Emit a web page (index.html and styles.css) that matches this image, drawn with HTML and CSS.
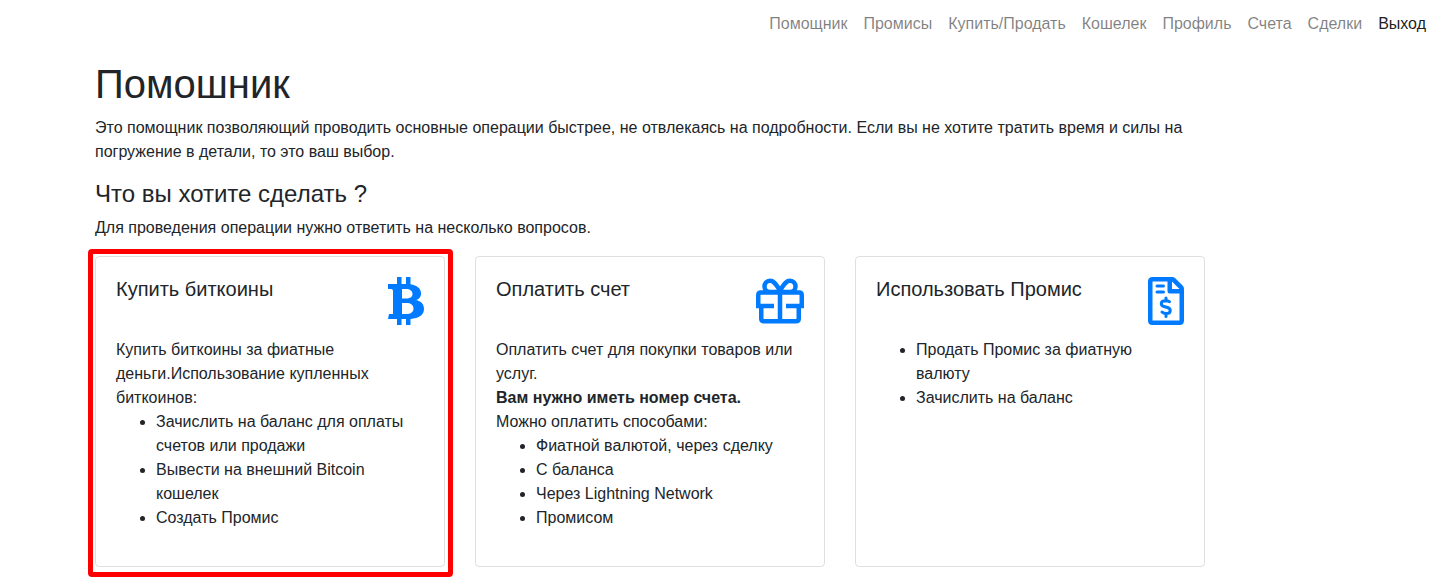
FILE: index.html
```
<!DOCTYPE html>
<html lang="ru">
<head>
<meta charset="utf-8">
<meta name="viewport" content="width=device-width, initial-scale=1">
<title>Помошник</title>
<link rel="stylesheet" href="styles.css">
</head>
<body>
<nav class="navbar">
  <a class="nav-link" href="#">Помощник</a>
  <a class="nav-link" href="#">Промисы</a>
  <a class="nav-link" href="#">Купить/Продать</a>
  <a class="nav-link" href="#">Кошелек</a>
  <a class="nav-link" href="#">Профиль</a>
  <a class="nav-link" href="#">Счета</a>
  <a class="nav-link" href="#">Сделки</a>
  <a class="nav-link nav-link-active" href="#">Выход</a>
</nav>
<main class="container">
  <h1 class="title">Помошник</h1>
  <p class="lead">Это помощник позволяющий проводить основные операции быстрее, не отвлекаясь на подробности. Если вы не хотите тратить время и силы на погружение в детали, то это ваш выбор.</p>
  <h2 class="subtitle">Что вы хотите сделать ?</h2>
  <p class="hint">Для проведения операции нужно ответить на несколько вопросов.</p>
  <div class="cards">
    <section class="card card-selected">
      <header class="card-head">
        <h3 class="card-title">Купить биткоины</h3>
        <svg class="icon" width="36" height="48" viewBox="0 0 36 48" aria-hidden="true">
          <path fill="currentColor" fill-rule="evenodd" d="M9 0h4.500v7H18V0h4.500v7.300C29 8.500 33 11.500 33 16.200c0 4-2 5.800-5 6.800 5 1 8 4 8 9 0 6-5 9.200-13.500 9.900V48H18v-6h-4.500v6H9v-6H0l1-5h3c1 0 1 0 1-1V14c0-1-.5-2-2-2H0V7h9zM14 12v9.500h4c4 0 6.500-1.500 6.500-4.500S22 12 18 12zM14 26v11h4c5 0 7.500-2 7.500-5.500S23 26 18 26z"/>
        </svg>
      </header>
      <p class="card-text">Купить биткоины за фиатные деньги.Использование купленных биткоинов:</p>
      <ul class="list">
        <li>Зачислить на баланс для оплаты счетов или продажи</li>
        <li>Вывести на внешний Bitcoin кошелек</li>
        <li>Создать Промис</li>
      </ul>
    </section>
    <section class="card">
      <header class="card-head">
        <h3 class="card-title">Оплатить счет</h3>
        <svg class="icon" width="48" height="48" viewBox="0 0 48 48" fill="none" stroke="currentColor" stroke-width="4.5" aria-hidden="true">
          <path d="M18 29H2.250V18q0-2.500 2.500-2.500h38.500q2.500 0 2.500 2.500v11H30M5.250 29v12.500q0 2.750 2.750 2.750h32q2.750 0 2.750-2.750V29M24 15v29M24 15H14c-3.500 0-5.500-2.500-5.500-5.500S10.500 3.750 14 3.750c4.500 0 6.500 5 10 9.500 3.500-4.500 5.500-9.500 10-9.500 3.500 0 5.500 2.750 5.500 5.750S37.500 15 34 15z"/>
        </svg>
      </header>
      <p class="card-text">Оплатить счет для покупки товаров или услуг.<br><strong>Вам нужно иметь номер счета.</strong><br>Можно оплатить способами:</p>
      <ul class="list">
        <li>Фиатной валютой, через сделку</li>
        <li>С баланса</li>
        <li>Через Lightning Network</li>
        <li>Промисом</li>
      </ul>
    </section>
    <section class="card">
      <header class="card-head">
        <h3 class="card-title">Использовать Промис</h3>
        <svg class="icon" width="36" height="48" viewBox="0 0 36 48" aria-hidden="true">
          <path fill="currentColor" fill-rule="evenodd" d="M4.500 0H24q2 0 3 1l8 8q1 1 1 3v31.500q0 4.500-4.500 4.500h-27Q0 48 0 43.500v-39Q0 0 4.500 0zM4.500 4.500v39h27V16.500H21.500q-2 0-2-2v-10zM24 4.500V12h7.500z"/>
          <path fill="none" stroke="currentColor" stroke-width="3" stroke-linecap="round" d="M9 9H15.500M9 15H15.500M18 21V24M18 36.500V39.500M21.500 24.700c-1-.6-2-.9-3-.9h-1.500c-4.500 0-5 4.500-1 5.700l3.500 1c4 1.200 3.500 6-1 6-2 0-3.500-.4-4.500-1.500"/>
        </svg>
      </header>
      <ul class="list">
        <li>Продать Промис за фиатную валюту</li>
        <li>Зачислить на баланс</li>
      </ul>
    </section>
  </div>
</main>
</body>
</html>
```
FILE: styles.css
```
*, *::before, *::after { box-sizing: border-box; }
body {
  margin: 0;
  background: #fff;
  color: #212529;
  font-family: "Liberation Sans", Arial, sans-serif;
  font-size: 16px;
  line-height: 24px;
}
h1, h2, h3, p, ul { margin: 0; font-weight: 400; }
.navbar {
  display: flex;
  flex-wrap: wrap;
  justify-content: flex-end;
  padding: 4px 6px;
}
.nav-link { padding: 8px; color: rgba(0, 0, 0, .5); text-decoration: none; }
.nav-link-active { color: rgba(0, 0, 0, .9); }
.container { max-width: 1220px; padding: 12px 15px 16px 95px; }
.title { margin-bottom: 8px; font-size: 40px; line-height: 48px; }
.lead { margin-bottom: 16px; }
.subtitle { margin-bottom: 8px; font-size: 24px; line-height: 28px; }
.hint { margin-bottom: 16px; }
.cards { display: grid; grid-template-columns: repeat(3, 1fr); gap: 30px; }
.card {
  position: relative;
  padding: 20px 20px 36px;
  border: 1px solid rgba(0, 0, 0, .125);
  border-radius: 4px;
}
.card-selected::after {
  content: "";
  position: absolute;
  inset: -8px -9px -11px -8px;
  border: 5px solid #f00;
  border-radius: 4px;
  pointer-events: none;
}
.card-head {
  display: flex;
  justify-content: space-between;
  align-items: flex-start;
  margin-bottom: 13px;
}
.card-title { font-size: 20px; line-height: 24px; }
.icon { flex: none; color: #007bff; }
.list { padding-left: 40px; }
```
